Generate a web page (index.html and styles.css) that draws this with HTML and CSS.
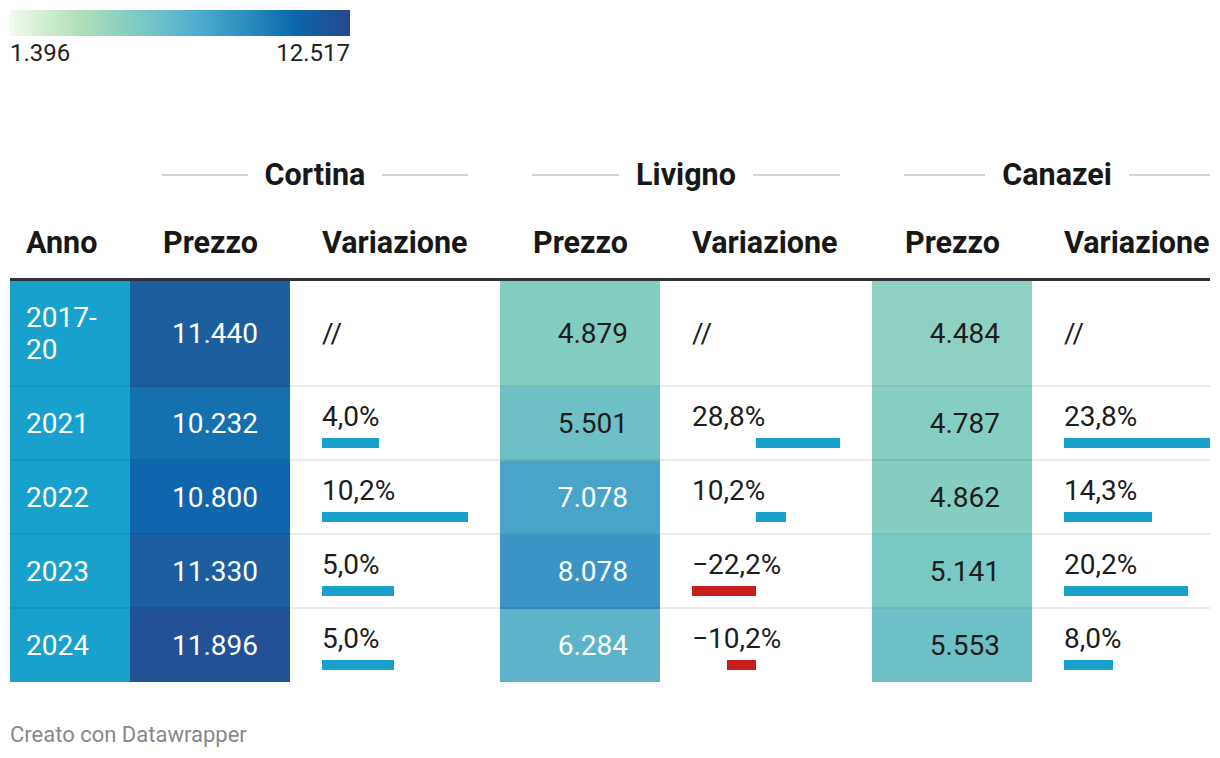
FILE: index.html
```html
<!DOCTYPE html>
<html lang="it">
<head>
<meta charset="utf-8">
<title>Prezzi</title>
<link rel="stylesheet" href="styles.css">
</head>
<body>
<div class="legend">
  <div class="legend-bar"></div>
  <div class="legend-labels"><span>1.396</span><span>12.517</span></div>
</div>
<table class="tbl">
  <colgroup>
    <col class="c-anno"><col class="c-p"><col class="c-v"><col class="c-p"><col class="c-v2"><col class="c-p"><col class="c-v3">
  </colgroup>
  <thead>
    <tr class="groups">
      <th></th>
      <th colspan="2"><div class="grp">Cortina</div></th>
      <th colspan="2"><div class="grp">Livigno</div></th>
      <th colspan="2" class="last"><div class="grp">Canazei</div></th>
    </tr>
    <tr class="cols">
      <th class="anno">Anno</th>
      <th class="num">Prezzo</th><th class="var">Variazione</th>
      <th class="num">Prezzo</th><th class="var">Variazione</th>
      <th class="num">Prezzo</th><th class="var last">Variazione</th>
    </tr>
  </thead>
  <tbody>
    <tr>
      <td class="anno">2017-20</td>
      <td class="num dark" style="background:#1d5e9e">11.440</td>
      <td class="var"><span class="slash">//</span></td>
      <td class="num" style="background:#83cdc0">4.879</td>
      <td class="var"><span class="slash">//</span></td>
      <td class="num" style="background:#8ed1c3">4.484</td>
      <td class="var last"><span class="slash">//</span></td>
    </tr>
    <tr>
      <td class="anno">2021</td>
      <td class="num dark" style="background:#1570b0">10.232</td>
      <td class="var"><div class="vt">4,0%</div><div class="track"><div class="bar" style="left:0;width:39.2%"></div></div></td>
      <td class="num" style="background:#6fc0c5">5.501</td>
      <td class="var"><div class="vt">28,8%</div><div class="track"><div class="bar" style="left:43.53%;width:56.47%"></div></div></td>
      <td class="num" style="background:#86cec1">4.787</td>
      <td class="var last"><div class="vt">23,8%</div><div class="track"><div class="bar" style="left:0;width:100%"></div></div></td>
    </tr>
    <tr>
      <td class="anno">2022</td>
      <td class="num dark" style="background:#1066ac">10.800</td>
      <td class="var"><div class="vt">10,2%</div><div class="track"><div class="bar" style="left:0;width:100%"></div></div></td>
      <td class="num dark" style="background:#48a5c9">7.078</td>
      <td class="var"><div class="vt">10,2%</div><div class="track"><div class="bar" style="left:43.53%;width:20%"></div></div></td>
      <td class="num" style="background:#84cdc0">4.862</td>
      <td class="var last"><div class="vt">14,3%</div><div class="track"><div class="bar" style="left:0;width:60.08%"></div></div></td>
    </tr>
    <tr>
      <td class="anno">2023</td>
      <td class="num dark" style="background:#1c5ea0">11.330</td>
      <td class="var"><div class="vt">5,0%</div><div class="track"><div class="bar" style="left:0;width:49%"></div></div></td>
      <td class="num dark" style="background:#3a94c5">8.078</td>
      <td class="var"><div class="vt">−22,2%</div><div class="track"><div class="bar neg" style="left:0;width:43.53%"></div></div></td>
      <td class="num" style="background:#78c8c4">5.141</td>
      <td class="var last"><div class="vt">20,2%</div><div class="track"><div class="bar" style="left:0;width:84.87%"></div></div></td>
    </tr>
    <tr class="lastrow">
      <td class="anno">2024</td>
      <td class="num dark" style="background:#225195">11.896</td>
      <td class="var"><div class="vt">5,0%</div><div class="track"><div class="bar" style="left:0;width:49%"></div></div></td>
      <td class="num dark" style="background:#5db4ca">6.284</td>
      <td class="var"><div class="vt">−10,2%</div><div class="track"><div class="bar neg" style="left:23.53%;width:20%"></div></div></td>
      <td class="num" style="background:#6dc0c6">5.553</td>
      <td class="var last"><div class="vt">8,0%</div><div class="track"><div class="bar" style="left:0;width:33.61%"></div></div></td>
    </tr>
  </tbody>
</table>
<div class="footer">Creato con Datawrapper</div>
</body>
</html>
```
FILE: styles.css
```css
html, body {
  margin: 0;
  padding: 0;
  background: #ffffff;
}
body {
  padding: 10px;
  font-family: Roboto, "Liberation Sans", sans-serif;
  color: #1d1d1d;
}
.legend {
  width: 340px;
}
.legend-bar {
  height: 26px;
  background: linear-gradient(to right, #f3faec 0%, #b1e0b8 20%, #7ccac4 38%, #4fadcf 55%, #2b8cbe 70%, #0b67ab 84%, #26468b 100%);
}
.legend-labels {
  margin-top: 3px;
  display: flex;
  justify-content: space-between;
  font-size: 24px;
  line-height: 28px;
  color: #222;
}
.tbl {
  margin-top: 92px;
  width: 1200px;
  table-layout: fixed;
  border-collapse: separate;
  border-spacing: 0;
  font-size: 28px;
  line-height: 32px;
}
.c-anno { width: 120px; }
.c-p { width: 160px; }
.c-v { width: 210px; }
.c-v2 { width: 212px; }
.c-v3 { width: 178px; }
th {
  font-weight: 700;
  font-size: 30.5px;
  color: #181818;
  padding: 0;
}
.groups th {
  padding: 0 32px;
}
.groups th.last {
  padding-right: 0;
}
.grp {
  display: flex;
  align-items: center;
  gap: 17px;
  justify-content: center;
}
.grp::before, .grp::after {
  content: "";
  flex: 1;
  height: 2px;
  background: #d2d2d2;
}
.cols th {
  padding-top: 36px;
  padding-bottom: 19px;
  border-bottom: 3px solid #333333;
  white-space: nowrap;
}
th.anno, td.anno {
  text-align: left;
  padding-left: 16px;
  padding-right: 16px;
}
th.num, td.num {
  text-align: right;
  padding-right: 32px;
  padding-left: 16px;
}
th.var, td.var {
  text-align: left;
  padding-left: 32px;
  padding-right: 32px;
}
th.var.last, td.var.last {
  padding-right: 0;
}
td {
  padding-top: 21px;
  padding-bottom: 19px;
  border-bottom: 2px solid rgba(0, 0, 0, 0.075);
  vertical-align: middle;
}
.lastrow td {
  border-bottom: 0;
  padding-bottom: 20px;
}
td.anno {
  background: #18a1cd;
  color: #ffffff;
}
td.dark {
  color: #ffffff;
}
td.var {
  padding-top: 2px;
  padding-bottom: 0;
}
.vt {
  line-height: 31px;
}
.track {
  position: relative;
  height: 10px;
  margin-top: 6px;
}
.bar {
  position: absolute;
  top: 0;
  height: 10px;
  background: #18a1cd;
}
.bar.neg {
  background: #c71e1d;
}
.slash {
  display: block;
}
.footer {
  margin-top: 40px;
  font-size: 22px;
  line-height: 26px;
  color: #888888;
}
```
